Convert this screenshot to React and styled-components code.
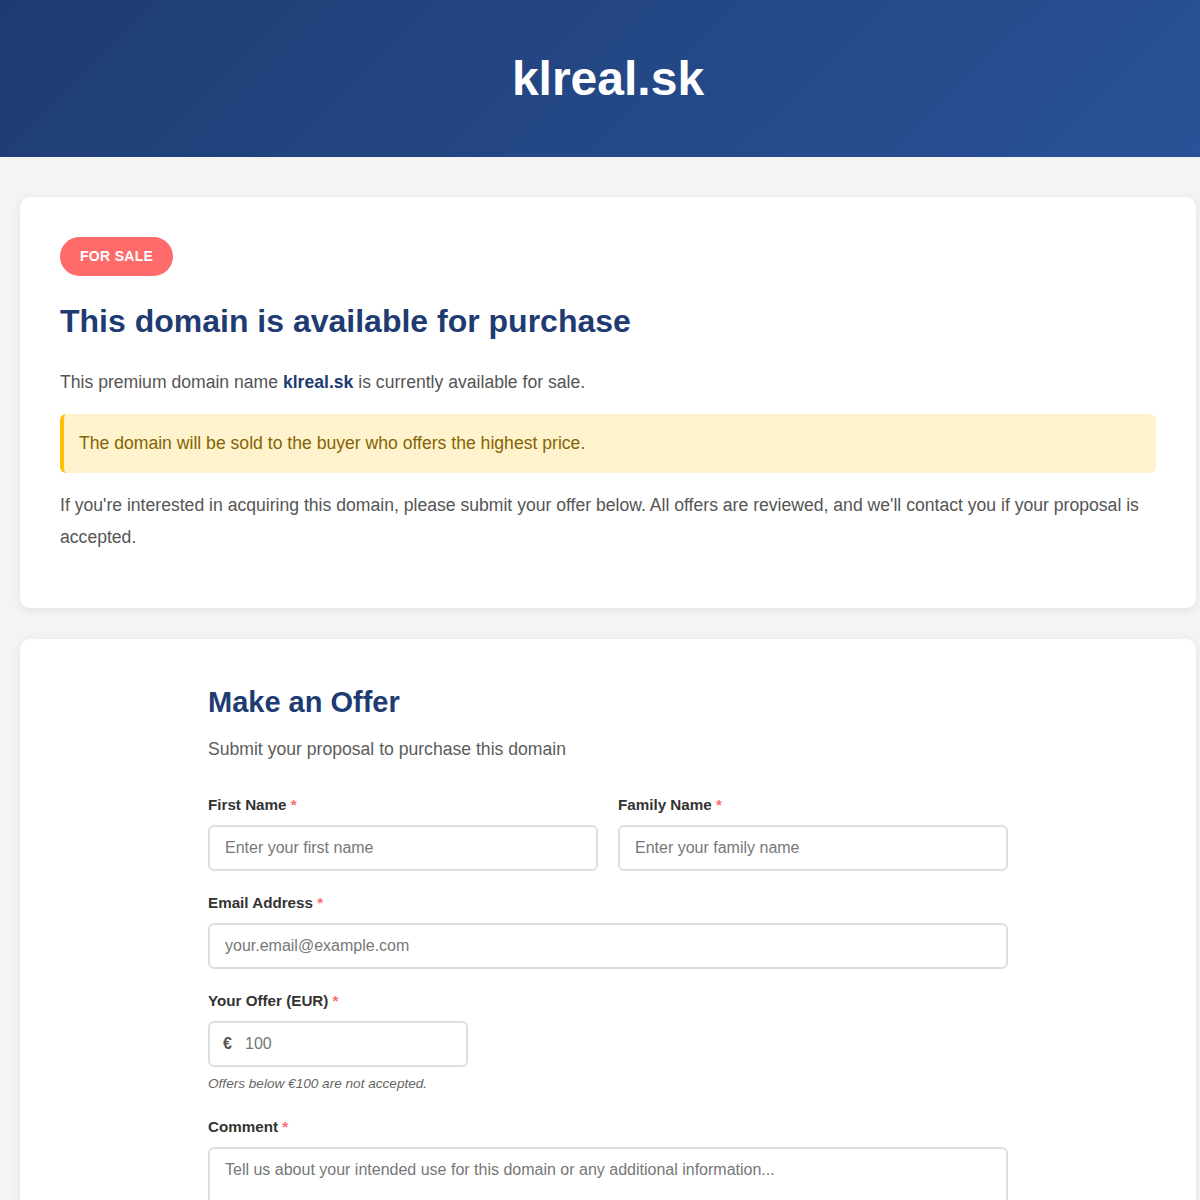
import React from "react";
import styled, { createGlobalStyle } from "styled-components";

const GlobalStyle = createGlobalStyle`
  * { box-sizing: border-box; }
  body {
    margin: 0;
    overflow-x: hidden;
    background: #f4f4f4;
    font-family: "Liberation Sans", Arial, sans-serif;
    color: #333;
  }
`;

// the page is laid out a little wider than the window, as in the original
const Page = styled.div`
  width: 1216px;
`;

const Header = styled.header`
  height: 157px;
  display: flex;
  align-items: center;
  justify-content: center;
  background: linear-gradient(135deg, #1e3c72 0%, #2a5298 100%);
  color: #fff;
`;

const SiteTitle = styled.h1`
  margin: 0;
  font-size: 48px;
  font-weight: 700;
  line-height: 1.2;
`;

const Main = styled.main`
  padding: 40px 20px;
  display: flex;
  flex-direction: column;
  gap: 31px;
`;

const Card = styled.section`
  background: #fff;
  border-radius: 10px;
  box-shadow: 0 2px 10px rgba(0, 0, 0, 0.08);
  padding: 40px;
`;

const Badge = styled.span`
  display: inline-block;
  background: #ff6b6b;
  color: #fff;
  font-size: 14px;
  font-weight: 700;
  line-height: 17px;
  padding: 11px 20px;
  border-radius: 20px;
  letter-spacing: 0.3px;
`;

const BadgeRow = styled.div`
  margin-bottom: 26px;
`;

const Title = styled.h2`
  margin: 0 0 27px;
  font-size: 32px;
  line-height: 38px;
  color: #1e3c72;
`;

const Text = styled.p`
  margin: 0 0 15px;
  font-size: 17.6px;
  line-height: 1.8;
  color: #555;

  &:last-child { margin-bottom: 14px; }
  strong { color: #1e3c72; }
`;

const Notice = styled.div`
  background: #fff3cd;
  border-left: 4px solid #ffc107;
  border-radius: 6px;
  padding: 14px 15px;
  margin: 0 0 17px;
  color: #856404;
  font-size: 17.6px;
  line-height: 1.8;
`;

const FormWrap = styled.div`
  max-width: 800px;
  margin: 0 auto;
`;

const FormTitle = styled.h2`
  margin: 5px 0 16px;
  font-size: 29px;
  line-height: 36px;
  color: #1e3c72;
`;

const Subtitle = styled.p`
  margin: 0 0 34px;
  font-size: 17.6px;
  line-height: 26px;
  color: #5c5c5c;
`;

const Row = styled.div`
  display: grid;
  grid-template-columns: 1fr 1fr;
  gap: 20px;
`;

const Group = styled.div`
  margin-bottom: ${(p) => p.$gap || 23}px;
`;

const Label = styled.label`
  display: block;
  font-size: 15.2px;
  font-weight: 700;
  line-height: 18px;
  margin-bottom: 11px;
  color: #333;
`;

const Req = styled.span`
  color: #ff6b6b;
`;

const Input = styled.input`
  display: block;
  width: 100%;
  height: 46px;
  padding: 0 15px 0 ${(p) => p.$indent || "15px"};
  border: 2px solid #ddd;
  border-radius: 6px;
  font-family: inherit;
  font-size: 16px;
  color: #333;
  &::placeholder { color: #777; }
`;

const Textarea = styled.textarea`
  display: block;
  width: 100%;
  height: 120px;
  padding: 11px 15px;
  border: 2px solid #ddd;
  border-radius: 6px;
  font-family: inherit;
  font-size: 16px;
  line-height: 20px;
  resize: vertical;
  &::placeholder { color: #777; }
`;

const MoneyField = styled.div`
  position: relative;
  width: 260px;
`;

const Currency = styled.span`
  position: absolute;
  left: 15px;
  top: 50%;
  transform: translateY(-50%);
  font-size: 16px;
  font-weight: 700;
  color: #555;
`;

const Hint = styled.small`
  display: block;
  margin-top: 8px;
  font-size: 13.6px;
  line-height: 18px;
  font-style: italic;
  color: #666;
`;

const Field = ({ label, children }) => (
  <Group>
    <Label>
      {label} <Req>*</Req>
    </Label>
    {children}
  </Group>
);

export default function App() {
  return (
    <Page>
      <GlobalStyle />
      <Header>
        <SiteTitle>klreal.sk</SiteTitle>
      </Header>
      <Main>
        <Card>
          <BadgeRow>
            <Badge>FOR SALE</Badge>
          </BadgeRow>
          <Title>This domain is available for purchase</Title>
          <Text>
            This premium domain name <strong>klreal.sk</strong> is currently available for sale.
          </Text>
          <Notice>The domain will be sold to the buyer who offers the highest price.</Notice>
          <Text>
            If you're interested in acquiring this domain, please submit your offer below. All
            offers are reviewed, and we'll contact you if your proposal is accepted.
          </Text>
        </Card>
        <Card>
          <FormWrap>
            <FormTitle>Make an Offer</FormTitle>
            <Subtitle>Submit your proposal to purchase this domain</Subtitle>
            <Row>
              <Field label="First Name">
                <Input placeholder="Enter your first name" />
              </Field>
              <Field label="Family Name">
                <Input placeholder="Enter your family name" />
              </Field>
            </Row>
            <Field label="Email Address">
              <Input type="email" placeholder="your.email@example.com" />
            </Field>
            <Group $gap={25}>
              <Label>
                Your Offer (EUR) <Req>*</Req>
              </Label>
              <MoneyField>
                <Currency>€</Currency>
                <Input $indent="35px" placeholder="100" />
              </MoneyField>
              <Hint>Offers below €100 are not accepted.</Hint>
            </Group>
            <Field label="Comment">
              <Textarea placeholder="Tell us about your intended use for this domain or any additional information..." />
            </Field>
          </FormWrap>
        </Card>
      </Main>
    </Page>
  );
}
